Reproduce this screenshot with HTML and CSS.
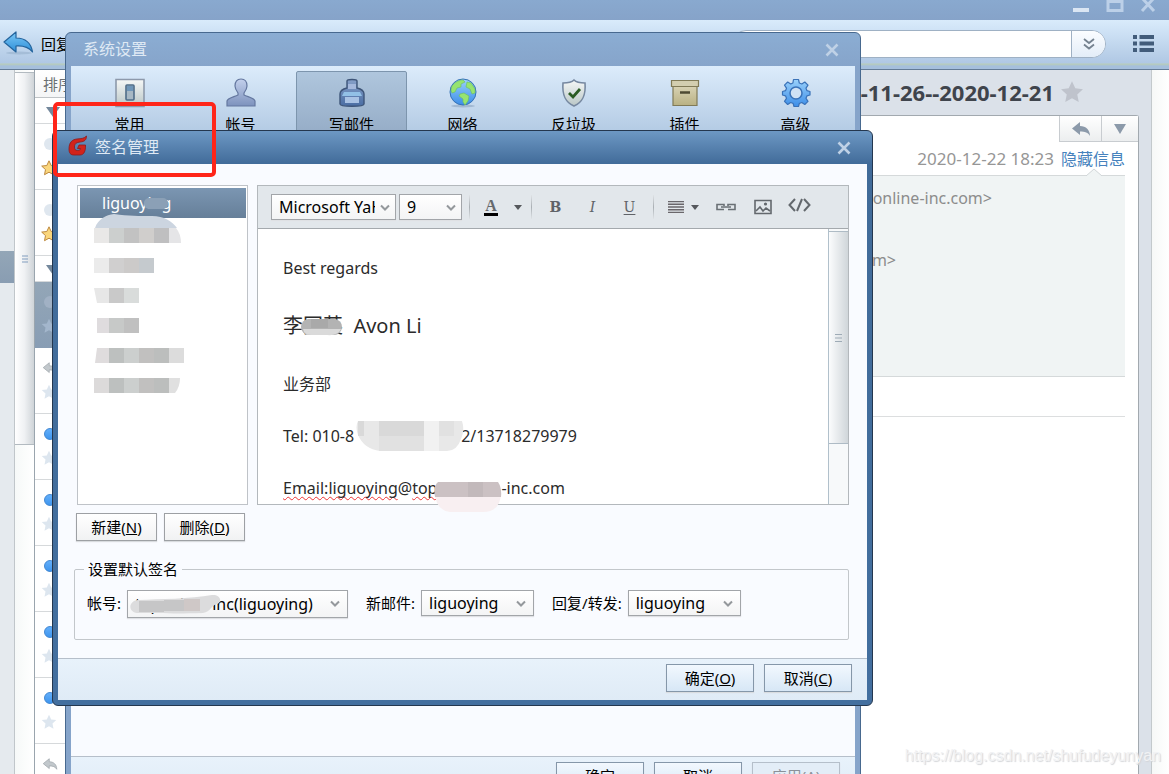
FILE: index.html
```html
<!DOCTYPE html>
<html lang="zh-CN">
<head>
<meta charset="utf-8">
<title>签名管理</title>
<link rel="stylesheet" href="styles.css">
</head>
<body>
<svg class="defs" width="0" height="0" aria-hidden="true">
  <defs>
    <symbol id="star" viewBox="0 0 16 16"><path d="M8 .8l2.2 4.7 5.1.6-3.8 3.5 1 5.1L8 12.200l-4.500 2.500 1-5.100L.7 6.100l5.100-.6z"/></symbol>
    <symbol id="reply" viewBox="0 0 20 16"><path d="M9 1v4c6 0 10 4 10 10-2-3.500-5-4.500-10-4.500V14L1 7.500z"/></symbol>
    <symbol id="close" viewBox="0 0 14 14"><path d="M1.500 1.500l11 11M12.500 1.500l-11 11" fill="none" stroke="currentColor" stroke-width="2.600"/></symbol>
    <symbol id="chev" viewBox="0 0 10 8"><path d="M1 1.500l4 4 4-4" fill="none" stroke="#94989c" stroke-width="2"/></symbol>
    <symbol id="grip" viewBox="0 0 7 8"><path d="M0 .5h7M0 4h7M0 7.500h7" stroke="currentColor" fill="none"/></symbol>
    <linearGradient id="gBlue" x1="0" y1="0" x2="0" y2="1"><stop offset="0" stop-color="#9ad1fb"/><stop offset="1" stop-color="#3d8ee8"/></linearGradient>
    <linearGradient id="gArrow" x1="0" y1="0" x2="0" y2="1"><stop offset="0" stop-color="#7cc8f6"/><stop offset="1" stop-color="#2e8fd8"/></linearGradient>
    <linearGradient id="gUser" x1="0" y1="0" x2="0" y2="1"><stop offset="0" stop-color="#c3d0ec"/><stop offset="1" stop-color="#7d92bd"/></linearGradient>
    <linearGradient id="gInk" x1="0" y1="0" x2="0" y2="1"><stop offset="0" stop-color="#86a0c9"/><stop offset="1" stop-color="#4a6da3"/></linearGradient>
    <linearGradient id="gGrey" x1="0" y1="0" x2="0" y2="1"><stop offset="0" stop-color="#f6f8f7"/><stop offset="1" stop-color="#b9c6c6"/></linearGradient>
    <linearGradient id="gBox" x1="0" y1="0" x2="0" y2="1"><stop offset="0" stop-color="#d8d2b4"/><stop offset="1" stop-color="#b9b183"/></linearGradient>
  </defs>
</svg>

<header class="titlebar">
  <button class="winbtn" aria-label="最小化"><svg width="18" height="16"><path d="M1 10h16" stroke="#dbe6f3" stroke-width="4"/></svg></button>
  <button class="winbtn" aria-label="最大化"><svg width="18" height="16"><path d="M2 1.500h14v9H2z" fill="none" stroke="#bcd0e8" stroke-width="3"/></svg></button>
  <button class="winbtn" aria-label="关闭"><svg width="16" height="16"><path d="M2-2l12 13M14-2L2 11" stroke="#bcd0e8" stroke-width="3"/></svg></button>
</header>

<div class="toolbar">
  <button class="replybtn"><svg width="31" height="25" viewBox="0 0 31 25"><ellipse cx="16" cy="22" rx="13" ry="1.500" fill="#8fa9c5" opacity=".5"/><path d="M13 1v6c9 0 15 5 16.500 14-4-5-9-6.500-16.500-6V21L1 11z" fill="url(#gArrow)" stroke="#23639c" stroke-width="1.200" stroke-linejoin="round"/></svg><span>回复</span></button>
  <div class="search">
    <input type="text" aria-label="搜索">
    <button aria-label="搜索选项"><svg width="12" height="12" viewBox="0 0 12 12"><path d="M1 1l5 4 5-4M1 6.500l5 4 5-4" fill="none" stroke="#75828f" stroke-width="1.800"/></svg></button>
  </div>
  <button class="menubtn" aria-label="菜单"><svg width="21" height="17" viewBox="0 0 21 17"><path d="M0 2h4M6.500 2H21M0 8.500h4M6.500 8.500H21M0 15h4M6.500 15H21" stroke="#425c7a" stroke-width="4"/></svg></button>
</div>

<main class="workspace">
  <nav class="folders"><a class="current" href="#inbox" aria-label="当前文件夹"></a></nav>
  <div class="rail"><div class="railthumb"><svg width="6" height="8"><use href="#grip"/></svg></div></div>
  <section class="mails">
    <div class="sort">排序</div>
    <div class="group"><svg width="14" height="10"><path d="M0 0h14L7 10z"/></svg></div>
    <div class="mail"><i class="dot"></i><svg class="star gold"><use href="#star"/></svg></div>
    <div class="mail"><i class="dot"></i><svg class="star gold"><use href="#star"/></svg></div>
    <div class="group"><svg width="14" height="10"><path d="M0 0h14L7 10z"/></svg></div>
    <div class="mail selected"><i class="dot"></i><svg class="star"><use href="#star"/></svg></div>
    <div class="mail"><svg class="replied"><use href="#reply"/></svg><svg class="star"><use href="#star"/></svg></div>
    <div class="mail"><i class="dot unread"></i><svg class="star"><use href="#star"/></svg></div>
    <div class="mail"><i class="dot unread"></i><svg class="star"><use href="#star"/></svg></div>
    <div class="mail"><i class="dot unread"></i><svg class="star"><use href="#star"/></svg></div>
    <div class="mail"><i class="dot unread"></i><svg class="star"><use href="#star"/></svg></div>
    <div class="mail"><i class="dot unread"></i><svg class="star"><use href="#star"/></svg></div>
    <div class="mail"><svg class="replied"><use href="#reply"/></svg></div>
  </section>
  <article class="reader">
    <header class="subject"><h1>-11-26--2020-12-21</h1><svg width="24" height="24"><use href="#star"/></svg></header>
    <div class="sheet">
      <div class="actions">
        <button aria-label="回复"><svg width="20" height="16"><use href="#reply"/></svg></button>
        <button aria-label="更多"><svg width="12" height="10"><path d="M0 0h12L6 10z"/></svg></button>
      </div>
      <p class="meta"><time>2020-12-22 18:23</time><a href="#details">隐藏信息</a></p>
      <div class="details">
        <svg class="caret" width="18" height="8"><path d="M1 8l8-7 8 7" fill="#f0f4f4" stroke="#d0d5d7"/></svg>
        <p class="from">online-inc.com&gt;</p>
        <p class="to">com&gt;</p>
      </div>
      <hr>
    </div>
  </article>
  <aside class="edge"></aside>
</main>

<section class="dialog settings" aria-label="系统设置">
  <header class="dtitle"><h2>系统设置</h2><button class="dclose" aria-label="关闭"><svg width="14" height="14"><use href="#close"/></svg></button></header>
  <div class="dinner">
    <nav class="tabs">
      <button><svg width="32" height="32" viewBox="0 0 32 32"><path d="M2 2.500h28v27H2z" fill="url(#gGrey)" stroke="#8d99ab" stroke-width="1.600"/><rect x="12" y="8" width="8" height="15" rx="1" fill="#a7b8c4" stroke="#4f6d89" stroke-width="1.600"/><path d="M13 9h6v5h-6z" fill="#6f96b8"/></svg><span>常用</span></button>
      <button><svg width="32" height="32" viewBox="0 0 32 32"><path d="M16 2c4 0 6 3 6 7 0 3-1.500 5-3 7v2c4 2 10 3 11 6v5H2v-5c1-3 7-4 11-6v-2c-1.500-2-3-4-3-7 0-4 2-7 6-7z" fill="url(#gUser)" stroke="#6578a0" stroke-width="1.200"/></svg><span>帐号</span></button>
      <button class="on"><svg width="32" height="32" viewBox="0 0 32 32"><path d="M11 4c0-2 10-2 10 0v7c4 1 7 3 7 6v10c0 3-24 3-24 0V17c0-3 3-5 7-6z" fill="url(#gInk)" stroke="#3e5579" stroke-width="1.400"/><path d="M12 7h8v5h-8z" fill="#a4b8dc"/><path d="M8 15h16l2 4H6z" fill="#92c0e6"/><path d="M9 20h14v6H9z" fill="#a9c2e4"/></svg><span>写邮件</span></button>
      <button><svg width="32" height="32" viewBox="0 0 32 32"><ellipse cx="16" cy="29" rx="12" ry="1.500" fill="#7f9ab8" opacity=".5"/><circle cx="16" cy="15" r="13" fill="url(#gBlue)" stroke="#3672b5"/><path d="M5 9c3-4 7-6 11-6l2 2-4 2v3l-4 1-2 4-3 1-1-3zM13 17l4-1 5 3-1 5-3 4-2-3v-3l-4-3zM20 5l4 1 4 6v4l-3 1-2-5-4-2z" fill="#97e470" stroke="#6cc05a" stroke-width=".6"/></svg><span>网络</span></button>
      <button><svg width="32" height="32" viewBox="0 0 32 32"><path d="M16 3c3 3 7 3 11 3 1 12-2 19-11 23C7 25 4 18 5 6c4 0 8 0 11-3z" fill="url(#gGrey)" stroke="#7688a0" stroke-width="1.600"/><path d="M11 16l4 4 7-8" fill="none" stroke="#2b5c24" stroke-width="2.800"/></svg><span>反垃圾</span></button>
      <button><svg width="32" height="32" viewBox="0 0 32 32"><path d="M4 9h24v19.500H4z" fill="url(#gBox)" stroke="#807a57" stroke-width="1.200"/><path d="M2.500 3.500h27v6h-27z" fill="#d3ceb0" stroke="#807a57" stroke-width="1.200"/><path d="M11 15.500h10" stroke="#4e4a33" stroke-width="2.500"/></svg><span>插件</span></button>
      <button><svg width="32" height="32" viewBox="0 0 32 32"><path d="M13.500 2.500h5l.8 3.500 2.500 1 3-2 3.200 3.200-2 3 1 2.500 3 .8v3.500l-3 .8-1 2.500 2 3-3.200 3.200-3-2-2.500 1-.8 3h-4.500l-.8-3-2.500-1-3 2-3.200-3.200 2-3-1-2.500-3-.8v-3.500l3-.8 1-2.500-2-3L7.700 5l3 2 2.200-1z" fill="url(#gBlue)" stroke="#3a72b8" stroke-width="1.200" stroke-linejoin="round"/><circle cx="16" cy="16" r="6" fill="#cfe1f5" stroke="#3a72b8" stroke-width="1.500"/></svg><span>高级</span></button>
    </nav>
    <div class="spring"></div>
    <footer class="dfoot">
      <button class="btn cool">确定</button><button class="btn cool">取消</button><button class="btn cool" disabled>应用(A)</button>
    </footer>
  </div>
</section>

<section class="dialog signature" aria-label="签名管理">
  <header class="dtitle"><svg class="logo" width="20" height="21" viewBox="0 0 20 21"><path d="M18.500 1c0 4-2 5.500-6 6-4 .4-6 1.500-6 5 0 2.500 1 3.500 3 3.500 1.800 0 2.700-.4 3-2H9.500l1.500-3.500h6.500c.3 6-1.500 10-5.500 10H6c-3.500 0-5-2-5-6C1 7.500 4 4.500 9 4c4.500-.4 7-.5 9.500-3z" fill="#d2231b" stroke="#8d1a1c" stroke-width=".8"/></svg><h2>签名管理</h2><button class="dclose" aria-label="关闭"><svg width="14" height="14"><use href="#close"/></svg></button></header>
  <div class="dinner">
    <div class="dbody">
      <div class="split">
        <ul class="names">
          <li class="chosen"><span>liguoying</span><svg class="smudge s-top" width="24" height="13"><rect width="24" height="11" y="1" rx="5" fill="#8ba0b6"/></svg></li>
          <li><svg class="smudge s-cap" width="86" height="14"><path d="M1 14C4 5 12 1 20 0c15 2 25 2 38 2 12 0 20 5 25 12z" fill="#ccd5e0"/></svg><svg width="90" height="15"><path fill="#e9e8e7" d="M0 0h15v15H0z"/><path fill="#cccfce" d="M15 0h15v15H15z"/><path fill="#c2c2c2" d="M30 0h15v15H30z"/><path fill="#d0cecc" d="M45 0h15v15H45z"/><path fill="#bfbfc0" d="M60 0h15v15H60z"/><path fill="#e5e5e7" d="M75 0h7q5 6 5 15H75z"/></svg></li>
          <li><svg width="90" height="15"><path fill="#ebebeb" d="M0 0h15v15H0z"/><path fill="#d0cfcf" d="M15 0h15v15H15z"/><path fill="#cccac9" d="M30 0h15v15H30z"/><path fill="#c5cace" d="M45 0h15v15H45z"/></svg></li>
          <li><svg width="90" height="15"><path fill="#e7e7e7" d="M0 0h15v15H3z"/><path fill="#c9c9c9" d="M15 0h15v15H15z"/><path fill="#d9dcdb" d="M30 0h15v15H30z"/></svg></li>
          <li><svg width="90" height="15"><path fill="#dfdcde" d="M3 0h12v15H3z"/><path fill="#c7c9c8" d="M15 0h15v15H15z"/><path fill="#c0c0c0" d="M30 0h15v15H30z"/></svg></li>
          <li><svg width="90" height="15"><path fill="#dfdcdd" d="M3 0h12v15H1z"/><path fill="#bdc0bf" d="M15 0h15v15H15z"/><path fill="#cccfce" d="M30 0h15v15H30z"/><path fill="#c1c0bf" d="M45 0h15v15H45z"/><path fill="#bcbebd" d="M60 0h15v15H60z"/><path fill="#dcdcdc" d="M75 0h15v15H75z"/></svg></li>
          <li><svg width="90" height="15"><path fill="#dcdada" d="M0 0h15v15H0z"/><path fill="#bdc0bf" d="M15 0h15v15H15z"/><path fill="#cccfce" d="M30 0h15v15H30z"/><path fill="#c1c0bf" d="M45 0h15v15H45z"/><path fill="#bcbebd" d="M60 0h15v15H60z"/><path fill="#e0e0e0" d="M75 0h11q0 9-5 15h-6z"/></svg></li>
        </ul>
        <div class="editor">
          <div class="edbar">
            <span class="pick font"><select aria-label="字体"><option>Microsoft YaHei</option></select><svg width="10" height="8"><use href="#chev"/></svg></span>
            <span class="pick size"><select aria-label="字号"><option>9</option></select><svg width="10" height="8"><use href="#chev"/></svg></span>
            <i class="sep"></i>
            <button class="color" aria-label="文字颜色"><b>A</b><svg width="8" height="5"><path d="M0 0h8L4 5z"/></svg></button>
            <i class="sep"></i>
            <button class="glyph bold" aria-label="加粗">B</button>
            <button class="glyph italic" aria-label="斜体">I</button>
            <button class="glyph under" aria-label="下划线">U</button>
            <i class="sep"></i>
            <button class="align" aria-label="对齐"><svg width="16" height="12"><path d="M0 .5h16M0 3.200h16M0 6h16M0 8.700h16M0 11.500h16" stroke="#6a676b" stroke-width="1.400"/></svg><svg width="8" height="5"><path d="M0 0h8L4 5z"/></svg></button>
            <button aria-label="链接"><svg width="20" height="9" fill="none" stroke="#6a7075" stroke-width="1.600"><path d="M8 6.500H1v-5h7V3M12 6.500h7v-5h-7V3M5 4h10"/></svg></button>
            <button aria-label="图片"><svg width="18" height="16" fill="none" stroke="#63686d" stroke-width="1.600"><path d="M1 1.500h16v13H1z"/><path d="M2 12l4-4 3 4 3-3 4 3"/><circle cx="11.500" cy="5" r=".8"/></svg></button>
            <button aria-label="源代码"><svg class="code" width="23" height="14" fill="none" stroke="#63686d" stroke-width="2"><path d="M7 1L1.500 7 7 13M16 1l5.500 6L16 13M14 1L9 13"/></svg></button>
          </div>
          <div class="edmain">
            <div class="doc" contenteditable="true" spellcheck="false">
              <p>Best regards</p>
              <p class="big">李国英 &nbsp;Avon Li<svg class="smudge s-name" width="42" height="20"><rect width="41" height="16" y="2" rx="8" fill="#b3b3b3"/><path fill="#a9a9a9" d="M10 2h17v9H10z"/><path fill="#dadada" d="M2 12h38q-3 7-14 6H10q-7 0-8-6z"/></svg></p>
              <p>业务部</p>
              <p class="masked"><span>Tel: 010-8</span><svg class="m-tel" width="108" height="30"><path d="M2 0h104q3 9-1 18-4 12-14 12H24Q8 28 2 14-1 6 2 0z" fill="#e8e8e8"/><path fill="#d9d9d9" d="M2 0h6v15H2zM23 0h45v15H23z"/><path fill="#e1e1e1" d="M23 15h45v15H23zM83 0h15v15H83z"/><path fill="#f1f1f1" d="M68 0h15v30H68z"/></svg><span>2/13718279979</span></p>
              <p class="masked"><span class="typo">Email:liguoying</span>@<span class="typo">top</span><svg class="m-mail" width="68" height="34"><path fill="#f8eff1" d="M1 14h66q0 20-18 20H16Q1 32 1 14z"/><path fill="#cbc1c3" d="M4 4h60q4 6 3 15H1Q-1 8 4 4z"/><path fill="#c2b9bb" d="M34 4h15v15H34z"/></svg><span>-inc.com</span></p>
            </div>
            <div class="edscroll"><div class="edthumb"><svg width="7" height="8"><use href="#grip"/></svg></div></div>
          </div>
        </div>
      </div>
      <div class="listbtns"><button class="btn">新建(<u>N</u>)</button><button class="btn">删除(<u>D</u>)</button></div>
      <fieldset>
        <legend>设置默认签名</legend>
        <div class="defaults">
          <label for="acc">帐号:</label>
          <span class="pick acct"><select id="acc"><option>toponline-inc(liguoying)</option></select><svg width="10" height="8"><use href="#chev"/></svg><svg class="smudge s-acc" width="92" height="20"><path d="M8 5C30 4 60 4 82 0c8-1 11 7 5 9-6 1-6 8-14 9-30 1-40 0-66 0-9-1-9-12 1-13z" fill="#dcdcdd"/><path fill="#c6c6c7" d="M9 6h25v11H9zM34 5h20v11H34z"/><path fill="#cfc8c7" d="M54 4h16v12H54z"/></svg></span>
          <label for="new">新邮件:</label>
          <span class="pick short"><select id="new"><option>liguoying</option></select><svg width="10" height="8"><use href="#chev"/></svg></span>
          <label for="rep">回复/转发:</label>
          <span class="pick short"><select id="rep"><option>liguoying</option></select><svg width="10" height="8"><use href="#chev"/></svg></span>
        </div>
      </fieldset>
    </div>
    <footer class="dfoot"><button class="btn cool">确定(<u>O</u>)</button><button class="btn cool">取消(<u>C</u>)</button></footer>
  </div>
</section>

<div class="marker"></div>
<div class="watermark">https://blog.csdn.net/shufudeyunyan</div>
</body>
</html>
```
FILE: styles.css
```css
* { box-sizing: border-box; }
body {
  margin: 0;
  height: 100vh;
  overflow: hidden;
  position: relative;
  display: flex;
  flex-direction: column;
  font: 15px/20px "Noto Sans", "Noto Sans CJK SC", sans-serif;
  color: #000;
  background: #fff;
}
button, select, input { font: inherit; color: inherit; margin: 0; padding: 0; border: 0; background: none; border-radius: 0; }
h1, h2, p, ul { margin: 0; padding: 0; font-weight: 400; }
svg { display: block; flex: none; }
.defs { position: absolute; }

/* main window */
.titlebar { height: 20px; flex: none; display: flex; justify-content: flex-end; gap: 16px; padding-right: 13px; background: linear-gradient(#89a9cf, #86a3c9); }
.winbtn { height: 16px; }
.winbtn svg { margin-top: -1px; }
.toolbar {
  height: 50px; flex: none; display: flex; align-items: center; padding: 0 15px 2px 3px;
  background: linear-gradient(#d9ebfb, #b0c8e4 43px, #b9cdb8 44px, #a5bfdc 46px);
  border-bottom: 1px solid #637b96;
}
.replybtn { display: flex; align-items: center; gap: 7px; }
.search { margin-left: auto; width: 374px; height: 28px; display: flex; border: 1px solid #9fb1c4; border-radius: 14px; background: #fff; overflow: hidden; }
.search input { flex: 1; min-width: 0; }
.search button { width: 34px; display: grid; place-items: center; border-left: 1px solid #9fb1c4; background: linear-gradient(#fbfdff, #e3edf8); }
.menubtn { margin-left: 27px; }
.workspace { flex: 1; min-height: 0; display: grid; grid-template-columns: 14px 21px 400px 1fr 18px; overflow: hidden; }
.folders { background: #e5eaee; padding-top: 181px; }
.folders .current { display: block; height: 32px; background: linear-gradient(#93a6b7, #899db2); }
.rail { border: solid #9aa5ae; border-width: 0 1px; background: linear-gradient(90deg, #f6f9f8, #fff); padding-top: 2px; border-left-color: #c0c6ca; }
.railthumb { height: 373px; border: 1px solid #b2bac0; border-width: 1px 0; display: grid; place-items: center; background: linear-gradient(90deg, #fff, #eff1f3 50%, #cfd4d8); color: #6f90b5; }

/* mail list */
.mails { background: #fff; overflow: hidden; }
.sort { height: 28px; padding: 4px 8px; color: #6b6f73; background: linear-gradient(#fff, #f4f5f6); border-bottom: 1px solid #bfc3c6; }
.group { height: 26px; padding: 9px 11px; border-bottom: 1px solid #d6d9db; fill: #74889c; }
.mail { height: 66px; padding: 14px 6px 0; display: flex; flex-direction: column; gap: 10px; border-bottom: 1px solid #d6d9db; }
.dot { flex: none; width: 12px; height: 12px; margin-left: 3px; border-radius: 50%; background: #dfe7ef; }
.unread { background: linear-gradient(#62aefa, #3f95ee); border: 1px solid #3f86d2; }
.star { width: 16px; height: 16px; fill: #dde6ef; }
.gold { fill: #fad67c; stroke: #bd8940; stroke-width: 1; }
.selected { background: linear-gradient(#93a6b7, #889db4); border: 0; }
.selected .dot { background: #a1b1c4; }
.selected .star { fill: #a3b6cc; }
.replied { width: 18px; height: 12px; fill: #c2c8cc; stroke: #9fa6ab; }

/* reading pane */
.reader { background: #dbe1e9; padding-right: 12px; display: flex; flex-direction: column; min-width: 0; }
.subject { height: 45px; display: flex; align-items: center; justify-content: flex-end; gap: 6px; padding: 0 55px 2px 0; fill: #bfc3cc; }
.subject h1 { font-size: 22px; line-height: 28px; font-weight: 700; color: #3f444c; }
.sheet { flex: 1; background: #fff; border: 1px solid #a2a9af; border-bottom: 0; padding-right: 13px; border-radius: 0 3px 0 0; }
.actions { display: flex; justify-content: flex-end; margin-right: -13px; }
.actions button { width: 42px; height: 26px; display: grid; place-items: center; border: solid #c8ccd0; border-width: 0 0 1px 1px; background: linear-gradient(#fff, #eceeef); fill: #8c9aaa; }
.actions button + button { width: 37px; }
.meta { display: flex; justify-content: flex-end; gap: 7px; padding-top: 6px; line-height: 22px; font-size: 16px; color: #969696; }
.meta time { font-size: 17px; }
.meta a { color: #4682bd; text-decoration: none; }
.details { position: relative; margin-top: 5px; height: 202px; padding-top: 11px; background: #f0f4f4; border: solid #d5d9da; border-width: 1px 0; text-align: right; font-size: 16px; line-height: 22px; color: #8c8c8c; }
.caret { position: absolute; right: 22px; top: -8px; }
.from { padding-right: 133px; }
.to { padding: 40px 229px 0 0; }
.sheet hr { margin: 39px 0 0; border: 0; border-top: 1px solid #dcdedf; }
.edge { background: linear-gradient(90deg, #f6f8f7, #fff); border-left: 1px solid #c3c9cc; }

/* dialogs */
.dialog { position: absolute; display: flex; flex-direction: column; padding: 0 5px 5px; border-radius: 6px; border: 1px solid #48698f; }
.settings { left: 65px; top: 32px; bottom: -30px; width: 796px; background: linear-gradient(#8badd3, #86a4ca 34px); color: #000; }
.signature { left: 52px; top: 130px; width: 821px; background: linear-gradient(#6d98c4, #416b99 33px, #436f9f); border-color: #24374f; }
.dtitle { height: 33px; flex: none; display: flex; align-items: center; padding: 0 16px 0 12px; color: #dfe9f4; }
.dtitle h2 { font-size: 16px; line-height: 22px; padding-bottom: 2px; }
.signature .dtitle { padding-left: 10px; gap: 7px; }
.logo { margin-bottom: 4px; }
.dclose { margin-left: auto; color: #bfd1e6; }
.dinner { flex: 1; display: flex; flex-direction: column; background: #f9fbff; }
.tabs { display: grid; grid-template-columns: repeat(7, 1fr); padding: 5px 4px 5px 3px; background: linear-gradient(#dcecfb, #abc4df 80px); }
.tabs button { display: flex; flex-direction: column; align-items: center; gap: 5px; padding: 5px 0 8px; border: 1px solid transparent; border-radius: 2px; }
.tabs .on { background: linear-gradient(#afc6dd, #92a9c4); border-color: #7d95ad; }
.spring { flex: 1; }
.dfoot { height: 42px; flex: none; display: flex; justify-content: flex-end; gap: 10px; padding: 5px 15px 8px; border-top: 1px solid #b6bfca; background: linear-gradient(#e8f2fb, #dfebf6); }
.btn { min-width: 81px; height: 28px; white-space: nowrap; border: 1px solid #9da0a4; background: linear-gradient(#fff, #f1f2f3); box-shadow: 0 1px 1px #d9dcdf; }
.cool { min-width: 88px; border-color: #8597a9; background: linear-gradient(#f2f8fe, #d7e7f6); }
.btn:disabled { color: #8b9199; border-color: #b5bfca; background: #e3edf7; }

.dbody { padding: 21px 18px 18px 16px; }
.split { display: grid; grid-template-columns: 171px 1fr; gap: 9px; margin-left: 3px; min-height: 320px; }
.names { list-style: none; padding: 2px 1px 2px 2px; border: 1px solid #bfc3c8; background: #fff; }
.names li { position: relative; height: 30px; padding: 10px 0 0 14px; }
.names .chosen { padding: 5px 22px; font-size: 16px; color: #fff; background: linear-gradient(#7b96b2, #667f99); }
.smudge { position: absolute; }
.s-top { left: 64px; top: 9px; }
.s-cap { left: 14px; top: -4px; }
.editor { display: flex; flex-direction: column; min-width: 0; border: 1px solid #b3b8bc; background: #fff; }
.edbar { height: 43px; flex: none; display: flex; align-items: center; padding-left: 13px; background: #e2e7eb; border-bottom: 1px solid #a4a9ad; }
.pick { position: relative; display: block; height: 26px; border: 1px solid #a2a5a9; background: linear-gradient(#fff, #f3f4f5); box-shadow: 0 1px 1px #dfe1e4; }
.pick select { appearance: none; display: block; width: 100%; height: 100%; padding: 0 20px 0 7px; font-size: 16px; }
.pick > svg:not(.smudge) { position: absolute; right: 7px; top: 9px; pointer-events: none; }
.font { width: 125px; }
.font > svg:not(.smudge), .size > svg:not(.smudge) { right: 5px; }
.size { width: 63px; margin: 0 7px 0 3px; }
.sep { width: 1px; height: 24px; background: linear-gradient(#dfe3e6, #a9afb4, #dfe3e6); margin-right: 5px; }
.edbar button { height: 26px; width: 37px; display: grid; place-items: center; fill: #55585c; }
.edbar .color, .edbar .align { display: flex; align-items: center; justify-content: center; gap: 16px; width: 56px; }
.edbar .align { gap: 7px; width: 48px; }
.color b { color: #66696d; font: 700 16px/14px "Liberation Serif", serif; border-bottom: 3px solid #000; padding: 0 1px; }
.edbar .glyph { font: 700 14px/20px "DejaVu Serif", "Liberation Serif", serif; color: #606368; }
.edbar .italic { font-style: italic; font-weight: 400; }
.edbar .under { font-weight: 400; text-decoration: underline; text-underline-offset: 2px; margin-right: 5px; }
.code { margin-top: -4px; }
.edmain { flex: 1; display: grid; grid-template-columns: 1fr 20px; }
.doc { padding: 28px 25px 0; font-size: 16px; line-height: 22px; color: #2b2b2b; outline: 0; }
.doc p { position: relative; margin-bottom: 30px; white-space: nowrap; }
.doc .big { margin: 34px 0; font-size: 20px; line-height: 26px; }
.doc p:last-child { margin-bottom: 0; }
.doc .masked { display: flex; align-items: flex-start; }
.masked svg { position: relative; }
.m-tel { margin: -4px -3px -4px 2px; }
.m-mail { margin: 1px -1px -13px -3px; }
.typo { text-decoration: underline wavy #e33 1px; text-underline-offset: 2px; text-decoration-skip-ink: none; }
.s-name { left: 18px; top: 4px; }
.edscroll { border-left: 1px solid #b1c0cb; padding-top: 2px; background: #f7f9fa; }
.edthumb { height: 213px; display: grid; place-items: center; color: #9eabb6; border: 1px solid #aebbc5; border-width: 1px 0; background: linear-gradient(90deg, #fbfcfd, #d0d6da); }
.listbtns { display: flex; gap: 7px; margin: 8px 0 0 2px; }
fieldset { margin: 18px 0 0; padding: 11px 12px 21px; border: 1px solid #c3c7cb; border-radius: 2px; min-width: 0; }
legend { margin-left: -3px; padding: 0 4px; line-height: 20px; }
.defaults { display: flex; align-items: flex-start; }
.defaults label { white-space: nowrap; margin-right: 6px; line-height: 26px; }
.defaults .pick { margin-right: 18px; }
.acct { width: 221px; height: 28px; }
.short { width: 113px; }
.s-acc { left: 2px; top: 4px; }

.marker { position: absolute; left: 53px; top: 102px; width: 163px; height: 75px; border: 4px solid #ff2519; border-radius: 5px; pointer-events: none; }
.watermark { position: absolute; right: 8px; bottom: 9px; font: 16px/18px "Liberation Sans", sans-serif; color: #f1f2f4; text-shadow: 1px 1px 1px #d3d5d8; }
```
